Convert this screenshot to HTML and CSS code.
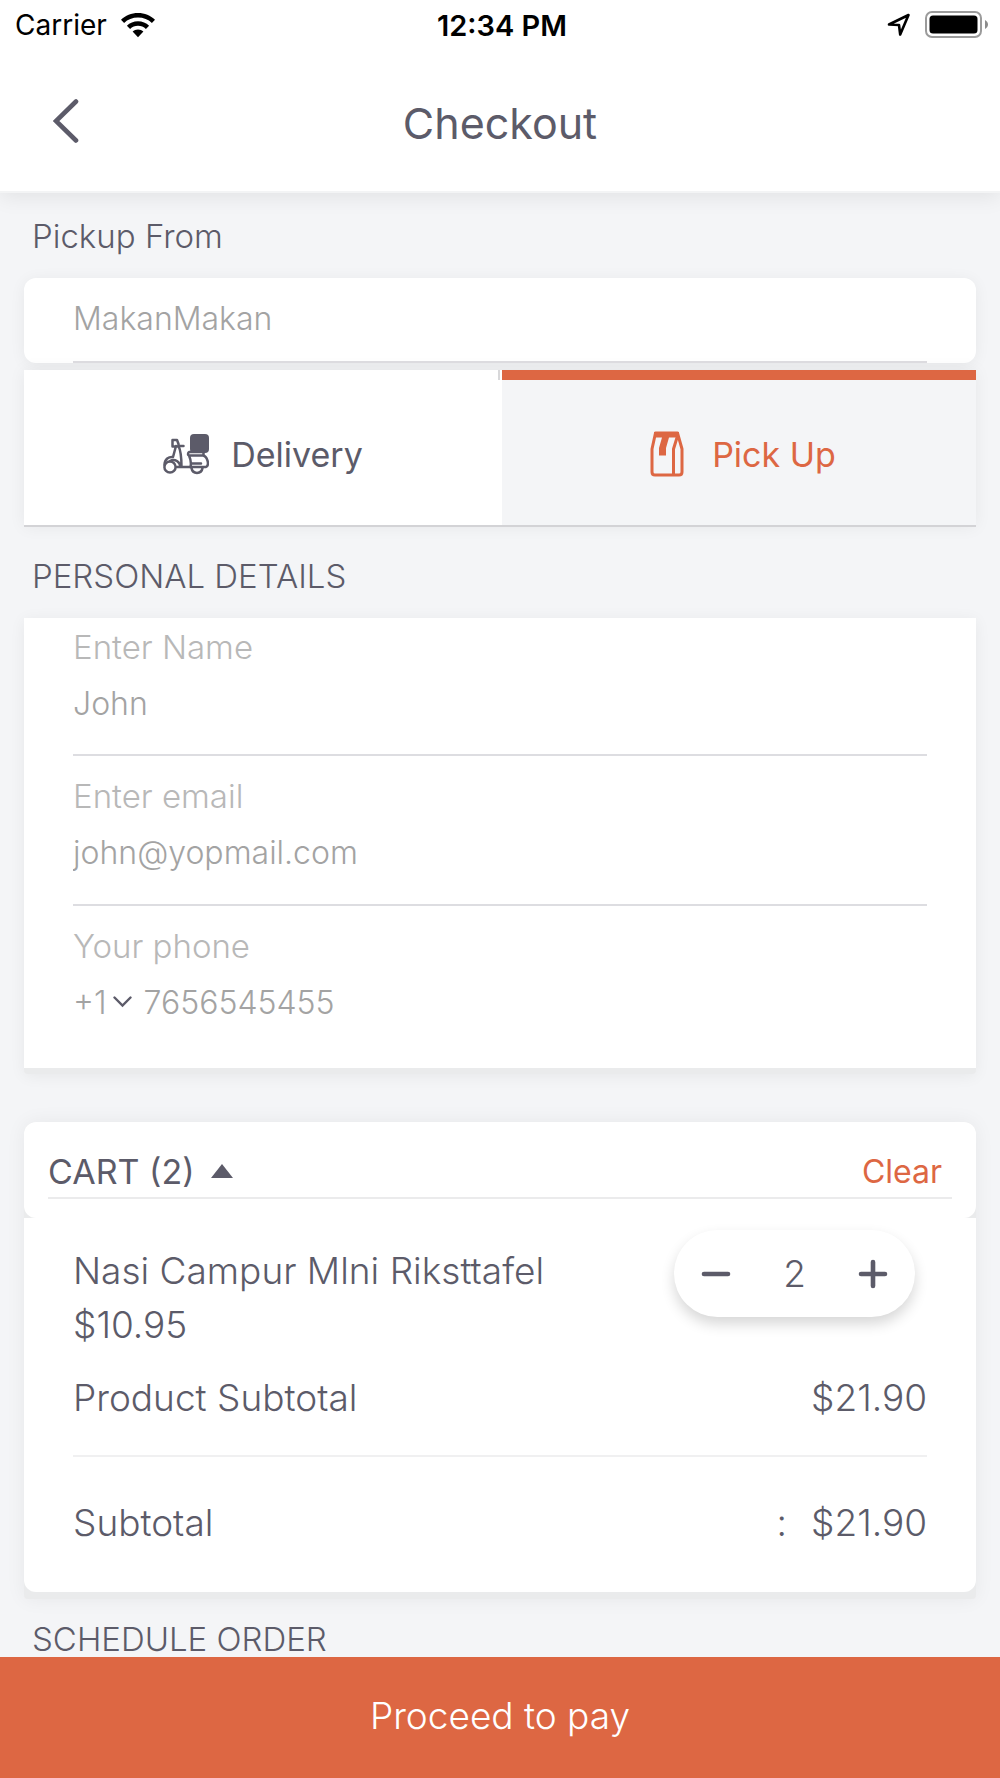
FILE: index.html
```html
<!DOCTYPE html>
<html lang="en">
<head>
  <meta charset="UTF-8">
  <meta name="viewport" content="width=device-width, initial-scale=1">
  <title>Checkout</title>
  <link rel="stylesheet" href="styles.css">
</head>
<body>

<header class="top">
  <div class="status">
    <div class="status-left">
      <span>Carrier</span>
      <svg width="34" height="25" viewBox="0 0 34 25">
        <path d="M17 0C10.400 0 4.400 2.600 0 6.800L3.100 9.900C6.700 6.500 11.600 4.500 17 4.500S27.300 6.500 30.900 9.900L34 6.800C29.600 2.600 23.600 0 17 0Z"/>
        <path d="M17 8.300C12.700 8.300 8.800 10 5.900 12.700L9.100 15.900C11.200 14 14 12.800 17 12.800S22.800 14 24.900 15.900L28.100 12.700C25.200 10 21.300 8.300 17 8.300Z"/>
        <path d="M17 16.500C14.900 16.500 13 17.300 11.600 18.600L17 24.200L22.400 18.600C21 17.300 19.100 16.500 17 16.500Z"/>
      </svg>
    </div>
    <span class="status-time">12:34 PM</span>
    <div class="status-right">
      <svg width="24" height="24" viewBox="0 0 24 24">
        <path d="M2 11.500L21.500 2L13.200 21.500L12 12Z" fill="none" stroke="#000" stroke-width="2.600" stroke-linejoin="round"/>
      </svg>
      <svg width="64" height="28" viewBox="0 0 64 28">
        <rect x="1" y="1" width="55" height="25" rx="6" fill="none" stroke="#9b9b9b" stroke-width="2"/>
        <rect x="4.500" y="4.500" width="48" height="18" rx="3.500"/>
        <path d="M60 9C64 11 64 16 60 18Z" fill="#8c8c8c"/>
      </svg>
    </div>
  </div>
  <nav class="navbar">
    <button class="back" aria-label="Back">
      <svg width="26" height="44" viewBox="0 0 26 44">
        <path d="M23 2.500L3 22L23 41.500" fill="none" stroke="#5c5b69" stroke-width="4.600" stroke-linecap="round"/>
      </svg>
    </button>
    <h1>Checkout</h1>
  </nav>
</header>

<main>
  <h2><label for="pickup">Pickup From</label></h2>
  <div class="card pickup">
    <input type="text" id="pickup" value="MakanMakan">
  </div>

  <div class="tabs">
    <button class="tab">
      <svg width="46" height="42" viewBox="0 0 46 42" fill="none" stroke="#5c5b69" stroke-width="2.500" stroke-linejoin="round" stroke-linecap="round">
        <rect x="27" y="1" width="19" height="19" rx="4" fill="#5c5b69" stroke="none"/>
        <circle cx="7" cy="34" r="5.600"/>
        <path d="M1.500 32C1.500 26 6 23.500 10 24L13 13M9.500 7H14L15.500 11V13.500H9.500ZM15.500 13H20.500M15.500 13C18 18 18.500 25 18.500 34H27.500M7 28C12 25 17 29 17.500 34M13.500 34H19"/>
        <path d="M26 19H40.500V22.500H26C24.500 22.500 25 19.500 26 19ZM26 22.500C28 27 28.500 30 27.500 34H43C47 32 44 23 40 22.500M28.500 30.500H38"/>
        <path d="M28.500 35C29.500 41.500 38.500 41.500 39.500 35"/>
      </svg>
      <span>Delivery</span>
    </button>
    <button class="tab active">
      <svg width="34" height="46" viewBox="0 0 34 46">
        <path d="M5.500 2H27.500L32 18V41Q32 44 29 44H5Q2 44 2 41V18ZM27.500 5L23.500 18V44" fill="none" stroke="#dd6743" stroke-width="3" stroke-linejoin="round"/>
        <path d="M4 1H29V6.500H19L16 17V24.500H9V17L12 6.500H4Z" fill="#dd6743"/>
      </svg>
      <span>Pick Up</span>
    </button>
  </div>

  <h2 class="spaced">PERSONAL DETAILS</h2>
  <form class="card details">
    <div class="field">
      <label for="name">Enter Name</label>
      <input type="text" id="name" value="John">
    </div>
    <div class="field">
      <label for="email">Enter email</label>
      <input type="email" id="email" value="john@yopmail.com">
    </div>
    <div class="field">
      <label for="phone">Your phone</label>
      <div class="phone">
        <button type="button" class="code">+1
          <svg width="19" height="12" viewBox="0 0 19 12">
            <path d="M1.500 1.500L9.500 9.500L17.500 1.500" fill="none" stroke="#5c5b69" stroke-width="2.400" stroke-linecap="round"/>
          </svg>
        </button>
        <input type="tel" id="phone" value="7656545455">
      </div>
    </div>
  </form>

  <section class="cart">
    <div class="cart-top">
      <div class="cart-head">
        <button class="toggle">CART (2)
          <svg width="22" height="14" viewBox="0 0 22 14"><path d="M11 0L22 14H0Z" fill="#5c5b69"/></svg>
        </button>
        <button class="clear">Clear</button>
      </div>
    </div>
    <div class="cart-body">
      <div class="item">
        <div class="item-text">
          <p>Nasi Campur Mlni Riksttafel</p>
          <p>$10.95</p>
        </div>
        <div class="stepper">
          <button aria-label="Remove one">
            <svg width="30" height="30" viewBox="0 0 30 30"><path d="M3 15H27" stroke="#5c5b69" stroke-width="4.600" stroke-linecap="round"/></svg>
          </button>
          <span>2</span>
          <button aria-label="Add one">
            <svg width="30" height="30" viewBox="0 0 30 30"><path d="M3 15H27M15 3V27" stroke="#5c5b69" stroke-width="4.600" stroke-linecap="round"/></svg>
          </button>
        </div>
      </div>
      <div class="row">
        <span>Product Subtotal</span>
        <span>$21.90</span>
      </div>
      <div class="row total">
        <span>Subtotal</span>
        <span class="colon">:</span>
        <span>$21.90</span>
      </div>
    </div>
  </section>

  <h2>SCHEDULE ORDER</h2>
</main>

<button class="pay">Proceed to pay</button>

</body>
</html>
```
FILE: styles.css
```css
* {
  box-sizing: border-box;
}
body {
  margin: 0;
  height: 100vh;
  display: flex;
  flex-direction: column;
  overflow: hidden;
  background: #f4f5f7;
  color: #5c5b69;
  font-family: Inter, sans-serif;
  font-size: 34px;
  font-weight: 300;
}
button, input {
  font: inherit;
  color: inherit;
  background: none;
  border: none;
  padding: 0;
  outline: none;
}
button {
  cursor: pointer;
}
svg {
  display: block;
  flex: none;
}
h1, h2, p {
  margin: 0;
}

/* header */
.top {
  position: relative;
  flex: none;
  background: #fff;
  border-bottom: 2px solid #f3f4f5;
  box-shadow: 0 4px 20px rgba(0, 0, 0, 0.08);
}
.status {
  display: grid;
  grid-template-columns: 1fr auto 1fr;
  align-items: center;
  height: 50px;
  padding: 0 11px 0 15px;
  color: #000;
  font-size: 28px;
  font-weight: 400;
}
.status-left, .status-right {
  display: flex;
  align-items: center;
  gap: 14px;
}
.status-right {
  justify-content: flex-end;
}
.status-time {
  font-size: 29px;
  font-weight: 600;
}
.navbar {
  display: grid;
  grid-template-columns: 1fr auto 1fr;
  align-items: center;
  height: 141px;
  padding: 0 53px;
}
.back {
  justify-self: start;
}
h1 {
  padding-top: 4px;
  font-size: 43px;
  line-height: 60px;
  font-weight: 400;
}

/* content */
main {
  flex: 1;
  min-height: 0;
  overflow: hidden;
  padding: 3px 24px 0;
}
h2 {
  padding: 23px 8px 25px;
  font-size: 33px;
  line-height: 34px;
  font-weight: 300;
}
.spaced {
  margin-top: 9px;
}
.card {
  background: #fff;
  box-shadow: 0 2px 16px rgba(0, 0, 0, 0.06);
}
.card input {
  display: block;
  width: 100%;
  color: #a3a3a3;
  font-size: 32px;
  font-weight: 300;
}
.pickup {
  padding: 0 49px;
  border-radius: 12px;
}
.pickup input {
  height: 85px;
  padding-bottom: 2px;
  border-bottom: 2px solid #dedde1;
}

/* delivery / pick up */
.tabs {
  display: grid;
  grid-template-columns: calc(50% + 2px) 1fr;
  margin-top: 7px;
  box-shadow: 0 0 16px rgba(0, 0, 0, 0.06);
}
.tab {
  position: relative;
  display: flex;
  align-items: center;
  justify-content: center;
  gap: 22px;
  height: 157px;
  padding-top: 3px;
  background: #fff;
  border-top: 10px solid #fff;
  border-bottom: 2px solid #d3d3d6;
  font-weight: 400;
}
/* short divider between the two tabs */
.tab:first-child::after {
  content: "";
  position: absolute;
  top: -10px;
  right: 2px;
  width: 2px;
  height: 10px;
  background: #d8d8da;
}
.tab.active {
  gap: 28px;
  padding-left: 8px;
  background: #f4f5f7;
  border-top-color: #dd6743;
  color: #dd6743;
}

/* personal details */
.details {
  padding: 0 49px;
  border-bottom: 6px solid #eaebec;
  border-radius: 0 0 4px 4px;
}
.field {
  padding: 12px 0 24px;
  border-bottom: 2px solid #dddde1;
}
.field:first-child {
  padding: 1px 0 23px;
}
.field:last-child {
  padding-bottom: 38px;
  border-bottom: none;
}
.field label {
  display: block;
  color: #b8b8b8;
  line-height: 56px;
  font-size: 33px;
}
.field input {
  height: 56px;
}
.phone {
  display: flex;
  gap: 12px;
}
.code {
  display: flex;
  align-items: center;
  gap: 6px;
  color: #a3a3a3;
  font-size: 32px;
}

/* cart */
.cart {
  margin-top: 48px;
  border-radius: 12px 12px 4px 4px;
  background: #eaebec;
  box-shadow: 0 0 20px rgba(0, 0, 0, 0.06);
  padding-bottom: 7px;
}
.cart-top {
  height: 96px;
  padding: 0 24px;
  background: #fff;
  border-radius: 12px;
}
.cart-head {
  display: flex;
  justify-content: space-between;
  align-items: flex-end;
  height: 77px;
  padding-right: 10px;
  border-bottom: 2px solid #ebebec;
}
.toggle, .clear {
  display: flex;
  align-items: center;
  gap: 16px;
  height: 52px;
  font-weight: 400;
}
.clear {
  color: #dd6743;
  font-size: 32px;
}
.cart-body {
  padding: 12px 49px 0;
  background: #fff;
  border-radius: 0 0 12px 12px;
  font-size: 37px;
}
.item {
  display: flex;
  justify-content: space-between;
  align-items: flex-start;
}
.item-text {
  padding-top: 14px;
  line-height: 54px;
}
.stepper {
  display: flex;
  align-items: center;
  justify-content: space-between;
  width: 241px;
  height: 87px;
  margin-right: 12px;
  padding: 0 27px;
  border-radius: 44px;
  background: #fff;
  box-shadow: 0 7px 14px rgba(0, 0, 0, 0.16);
}
.row {
  display: flex;
  justify-content: space-between;
  align-items: center;
  height: 103px;
  padding-bottom: 12px;
}
.total {
  height: 137px;
  padding: 0 0 4px;
  border-top: 2px solid #f0f0f1;
}
.colon {
  margin-left: auto;
  margin-right: 24px;
}

.pay {
  flex: none;
  height: 121px;
  padding-bottom: 4px;
  background: #dd6743;
  color: #fff;
  font-size: 37px;
}
```
